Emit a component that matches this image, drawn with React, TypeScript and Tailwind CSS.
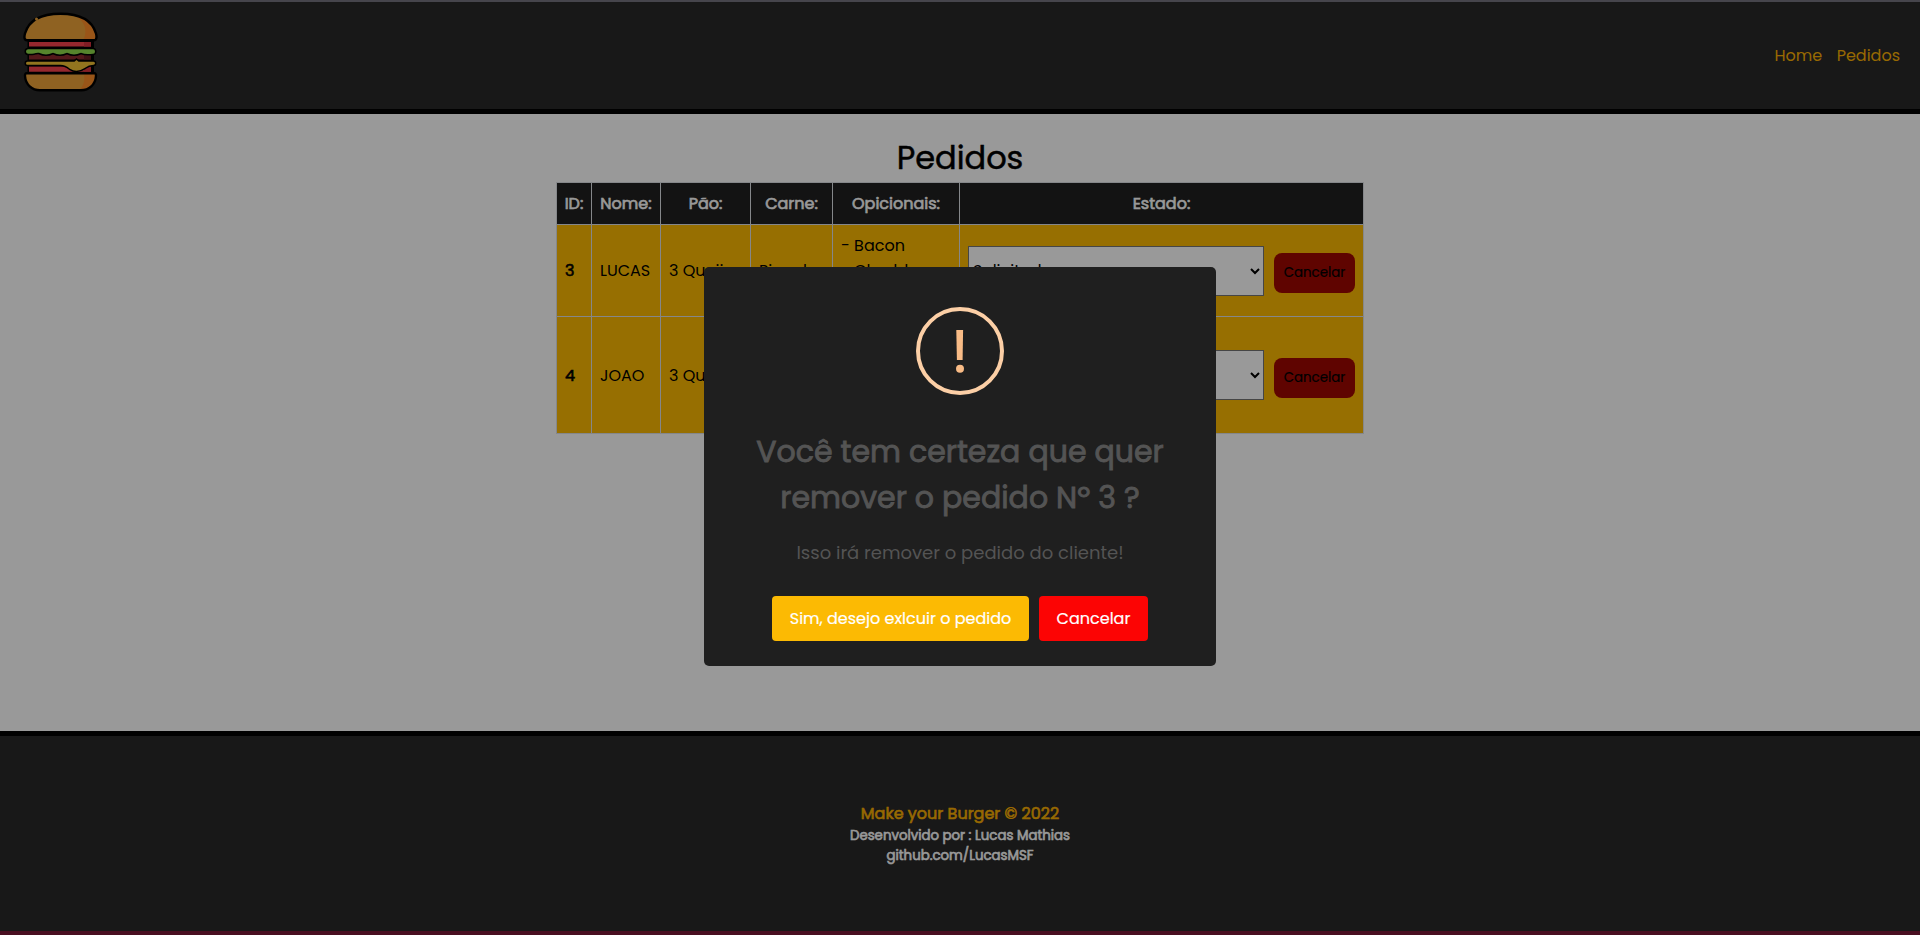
import type { ReactNode } from "react";

const topBun =
  "M27 40.3C24.2 40.3 24 37 25 33.5C29 19.5 42 13.7 60.5 13.7S92 19.5 96 33.5C97 37 96.500 40.3 94 40.3Z";
const bottomBun = "M27 73.2H94Q96.200 73.2 96 76C95.5 84.5 89 90.2 81 90.2H40C32 90.2 25.500 84.5 25 76Q24.800 73.2 27 73.2Z";

function BurgerLogo() {
  return (
    <svg width="76" height="82" viewBox="22 10 76 82" className="block" aria-hidden="true">
      <path d="M27.500 40h66.500v34h-66.500z" fill="#000" />
      <path d="M29 42h62v4.600H29z" fill="#f8444d" />
      <path d="M84 42h7v4.600h-7z" fill="#d8323f" />
      <path d="M29 53.500h62v6H29z" fill="#8b292d" />
      <path d="M84 53.500h7v6h-7z" fill="#681c22" />
      <path
        d="M28 49.200H93Q95 49.200 95 51.500T93 53.700Q90 53.900 88 54Q84 54 81 52.800Q77 54.600 74 54.600T67 52.800Q63 54.600 60 54.600T53 52.800Q49 54.600 46 54.600T39 52.800Q36 52.600 34 53.500Q31 54 28 53.700Q26 53.600 26 51.500T28 49.200Z"
        fill="#90dd4c"
        stroke="#000"
        strokeWidth="3"
        paintOrder="stroke"
      />
      <path d="M29 66.500h62v5.200H29z" fill="#f8444d" />
      <path d="M84 66.500h7v5.200h-7z" fill="#d8323f" />
      <path
        d="M27.500 61.700H74.500L76.500 60L78.500 61.700H93.500a1.500 1.500 0 0 1 0 3q-5 .2-8.500 3-8 5.400-15 1-4.500-4-9.500-4H27.500a1.500 1.500 0 0 1 0-3z"
        fill="#f4c435"
        stroke="#000"
        strokeWidth="3"
        paintOrder="stroke"
      />
      <path d={topBun} fill="#efa33a" />
      <path d="M71 14.500C84 17 92.500 23.500 96 33.500C97 37 96.500 40.300 94 40.300H83C88 32 86 19 71 14.500Z" fill="#ff8e28" />
      <path d={topBun} fill="none" stroke="#000" strokeWidth="2.400" />
      <circle cx="36.500" cy="19" r="1.500" fill="#efa33a" />
      <path d={bottomBun} fill="#efa33a" />
      <path d="M84 73.200H94Q96.200 73.200 96 76C95.500 84.500 89 90.200 79 90.200Q86 84 84 73.200Z" fill="#ff8e28" />
      <path d={bottomBun} fill="none" stroke="#000" strokeWidth="2.400" />
    </svg>
  );
}

function Cell({ children, className = "" }: { children: ReactNode; className?: string }) {
  return <div className={`flex items-center border-l border-t border-[#dee2e6] px-2 ${className}`}>{children}</div>;
}

const columns = "grid grid-cols-[35px_69px_90px_82px_127px_404px] border-r border-[#dee2e6]";
const bold = "[-webkit-text-stroke:0.6px_currentColor]";

const headings = ["ID:", "Nome:", "Pão:", "Carne:", "Opicionais:", "Estado:"];

const orders = [
  {
    id: 3,
    name: "LUCAS",
    options: ["Bacon", "Cheddar", "Salame"],
    height: "h-[92px]",
    textClass: "",
    buttonClass: "mt-[5px]",
  },
  {
    id: 4,
    name: "JOAO",
    options: ["Bacon", "Cheddar", "Salame", "Tomate"],
    height: "h-[117px]",
    textClass: "pt-px",
    buttonClass: "mt-[6px]",
  },
];

export default function App() {
  return (
    <div className="flex h-[935px] flex-col overflow-hidden bg-white font-['Poppins','Inter',sans-serif] text-base text-black [font-feature-settings:'cv11']">
      <header className="flex h-[114px] shrink-0 items-center justify-between border-b-[5px] border-t-2 border-b-black border-t-[#75737f] bg-[#282828] pl-[22px] pr-5">
        <div className="pb-[9px]">
          <BurgerLogo />
        </div>
        <nav className="flex gap-[14.5px] text-[#fcb103]">
          <a href="#">Home</a>
          <a href="#">Pedidos</a>
        </nav>
      </header>

      <main className="flex flex-1 flex-col items-center pt-[23px]">
        <h1 className="h-[45px] text-[32px] leading-[42px] [-webkit-text-stroke:0.5px_currentColor]">Pedidos</h1>
        <div className="border-b border-[#dee2e6]">
          <div className={`${columns} h-[42px] bg-[#212121] text-white ${bold}`}>
            {headings.map((h) => (
              <Cell key={h} className="justify-center whitespace-nowrap">
                {h}
              </Cell>
            ))}
          </div>
          {orders.map((order) => (
            <div key={order.id} className={`${columns} ${order.height} bg-[#fcba03]`}>
              <Cell className={`${bold} ${order.textClass}`}>{order.id}</Cell>
              <Cell className={order.textClass}>{order.name}</Cell>
              <Cell className={`whitespace-nowrap ${order.textClass}`}>3 Queijos</Cell>
              <Cell className={order.textClass}>Picanha</Cell>
              <Cell>
                <ul className="leading-[25px]">
                  {order.options.map((o) => (
                    <li key={o}>- {o}</li>
                  ))}
                </ul>
              </Cell>
              <Cell className="gap-2.5">
                <select className="h-[50px] w-[296px] border border-[#767676] bg-white">
                  <option>Solicitado</option>
                </select>
                <button className={`h-10 w-[81px] rounded-lg bg-[#9e0800] text-[13.33px] [-webkit-text-stroke:0.2px_currentColor] ${order.buttonClass}`}>
                  Cancelar
                </button>
              </Cell>
            </div>
          ))}
        </div>
      </main>

      <footer className={`flex h-[204px] shrink-0 flex-col items-center border-b-4 border-t-[5px] border-b-[#7a1a38] border-t-black bg-[#282828] pt-[66px] text-[13.33px] leading-5 text-white ${bold}`}>
        <p className="text-base leading-6 text-[#fcb103]">Make your Burger © 2022</p>
        <p>Desenvolvido por : Lucas Mathias</p>
        <p>github.com/LucasMSF</p>
      </footer>

      <div className="fixed inset-0 flex items-center justify-center bg-black/40 pb-[2px]">
        <div
          role="dialog"
          className="flex h-[399px] w-[512px] flex-col items-center rounded-[5px] bg-[#1f1f1f] pt-10 text-center text-[#545454]"
        >
          <svg width="88" height="88" viewBox="0 0 88 88" aria-hidden="true">
            <circle cx="44" cy="44" r="42" fill="none" stroke="#fccfa6" strokeWidth="4" />
            <path d="M40.300 23h6.800l-.5 30h-5.700z" fill="#f8bb86" />
            <circle cx="44" cy="61.700" r="4" fill="#f8bb86" />
          </svg>
          <h2 className="mt-[34px] w-[430px] text-[30px] leading-[46px] [-webkit-text-stroke:0.9px_currentColor]">
            Você tem certeza que quer remover o pedido Nº 3 ?
          </h2>
          <p className="mt-[18px] text-lg leading-7">Isso irá remover o pedido do cliente!</p>
          <div className="mt-[29px] flex gap-2.5 text-white [-webkit-text-stroke:0.2px_currentColor]">
            <button className="h-[45px] w-[257px] rounded bg-[#fcba03]">Sim, desejo exlcuir o pedido</button>
            <button className="h-[45px] w-[109px] rounded bg-[#fc0404]">Cancelar</button>
          </div>
        </div>
      </div>
    </div>
  );
}
